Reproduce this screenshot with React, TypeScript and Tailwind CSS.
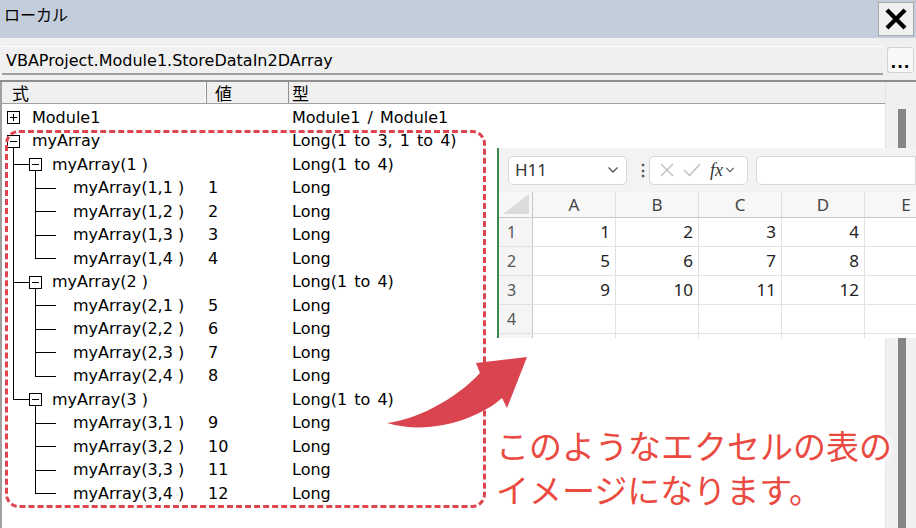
import React from 'react';

type Kind = 'rootPlus' | 'rootMinus' | 'mid' | 'leaf';

interface Row {
  kind: Kind;
  label: string;
  value?: string;
  type: string;
  lastMid?: boolean;
  lastLeaf?: boolean;
  underLast?: boolean;
}

const rows: Row[] = [
  { kind: 'rootPlus', label: 'Module1', type: 'Module1 / Module1' },
  { kind: 'rootMinus', label: 'myArray', type: 'Long(1 to 3, 1 to 4)' },
];
[1, 2, 3].forEach((k) => {
  rows.push({ kind: 'mid', label: `myArray(${k} )`, type: 'Long(1 to 4)', lastMid: k === 3 });
  [1, 2, 3, 4].forEach((j) => {
    rows.push({
      kind: 'leaf',
      label: `myArray(${k},${j} )`,
      value: String((k - 1) * 4 + j),
      type: 'Long',
      lastLeaf: j === 4,
      underLast: k === 3,
    });
  });
});

const textW: Record<Kind, number> = { rootPlus: 30, rootMinus: 30, mid: 50, leaf: 71 };

function Connector({ row }: { row: Row }) {
  const x0 = 11.5;
  const x1 = 33.5;
  const cy = 11.5;
  const s = { stroke: '#000', strokeWidth: 1, fill: 'none' };
  const w = textW[row.kind];
  return (
    <svg width={w} height={23.5} shapeRendering="crispEdges" className="shrink-0">
      {(row.kind === 'rootPlus' || row.kind === 'rootMinus') && (
        <>
          <rect x={5.5} y={5.5} width={12} height={12} {...s} fill="#fff" />
          <line x1={8} y1={cy} x2={15} y2={cy} {...s} />
          {row.kind === 'rootPlus' && <line x1={x0} y1={8} x2={x0} y2={15} {...s} />}
          {row.kind === 'rootMinus' && <line x1={x0} y1={17.5} x2={x0} y2={24} {...s} />}
        </>
      )}
      {row.kind === 'mid' && (
        <>
          <line x1={x0} y1={0} x2={x0} y2={row.lastMid ? cy : 24} {...s} />
          <line x1={x0} y1={cy} x2={27.5} y2={cy} {...s} />
          <rect x={27.5} y={5.5} width={12} height={12} {...s} fill="#fff" />
          <line x1={30} y1={cy} x2={37} y2={cy} {...s} />
          <line x1={x1} y1={17.5} x2={x1} y2={24} {...s} />
        </>
      )}
      {row.kind === 'leaf' && (
        <>
          {!row.underLast && <line x1={x0} y1={0} x2={x0} y2={24} {...s} />}
          <line x1={x1} y1={0} x2={x1} y2={row.lastLeaf ? cy : 24} {...s} />
          <line x1={x1} y1={cy} x2={54} y2={cy} {...s} />
        </>
      )}
    </svg>
  );
}

function Chevron({ className = '' }: { className?: string }) {
  return (
    <svg width="12" height="8" viewBox="0 0 12 8" className={className}>
      <path d="M1.5 1.5 L6 6 L10.5 1.5" stroke="#555" strokeWidth="1.3" fill="none" />
    </svg>
  );
}

function ExcelPanel() {
  const cols = ['A', 'B', 'C', 'D', 'E'];
  const data = [
    ['1', '2', '3', '4', ''],
    ['5', '6', '7', '8', ''],
    ['9', '10', '11', '12', ''],
    ['', '', '', '', ''],
    ['', '', '', '', ''],
  ];
  return (
    <div className="absolute left-[497px] top-[148px] w-[419px] h-[190px] overflow-hidden bg-white border-l-2 border-[#3c8a4f] font-['Noto_Sans',sans-serif]">
      {/* formula bar */}
      <div className="h-[44px] bg-[#f3f3f3] flex items-center pl-[9px] gap-[8px]">
        <div className="w-[119px] h-[29px] bg-white border border-[#d6d6d6] rounded-[5px] flex items-center justify-between pl-[6px] pr-[7px]">
          <span className="text-[17px] text-[#333]">H11</span>
          <Chevron />
        </div>
        <span className="text-[#555] text-[16px] font-bold leading-none w-[6px] text-center">⋮</span>
        <div className="w-[99px] h-[29px] bg-white border border-[#d6d6d6] rounded-[5px] flex items-center pl-[10px] gap-[9px]">
          <svg width="14" height="14" viewBox="0 0 14 14">
            <path d="M1 1 L13 13 M13 1 L1 13" stroke="#bcbcbc" strokeWidth="1.3" />
          </svg>
          <svg width="18" height="14" viewBox="0 0 18 14">
            <path d="M1 7 L6.5 12.5 L17 1" stroke="#bcbcbc" strokeWidth="1.3" fill="none" />
          </svg>
          <div className="flex items-center gap-[2px]">
            <span className="font-['Liberation_Serif',serif] italic text-[18px] text-[#333] leading-none">fx</span>
            <Chevron className="w-[10px]" />
          </div>
        </div>
        <div className="flex-1 h-[29px] bg-white border border-[#d6d6d6] rounded-l-[5px]" />
      </div>
      {/* grid */}
      <div className="flex h-[26px] bg-[#f7f7f7] border-b border-[#c8c8c8]">
        <div className="w-[34px] shrink-0 border-r border-[#c8c8c8] flex items-end justify-end p-[3px]">
          <div className="w-[26px] h-[20px] bg-[#dcdcdc] [clip-path:polygon(100%_0,100%_100%,0_100%)]" />
        </div>
        {cols.map((c) => (
          <div key={c} className="w-[83px] shrink-0 border-r border-[#e0e0e0] flex items-center justify-center text-[17px] text-[#444]">
            {c}
          </div>
        ))}
      </div>
      {data.map((r, i) => (
        <div key={i} className="flex h-[29px] border-b border-[#e2e2e2]">
          <div className="w-[34px] shrink-0 bg-[#f5f5f5] border-r border-[#c8c8c8] pl-[8px] flex items-center text-[16px] text-[#555]">
            {i < 4 ? i + 1 : ''}
          </div>
          {r.map((v, j) => (
            <div key={j} className="w-[83px] shrink-0 border-r border-[#e2e2e2] flex items-center justify-end pr-[5px] text-[17px] text-[#222]">
              {v}
            </div>
          ))}
        </div>
      ))}
    </div>
  );
}

export default function App() {
  return (
    <div className="w-[916px] h-[528px] relative overflow-hidden bg-[#f0f0f0] flex flex-col font-['DejaVu_Sans',sans-serif] text-black">
      {/* title bar */}
      <div className="h-[38px] bg-[#c4cddc] flex items-center justify-between pl-[4px] pr-[2px] shrink-0">
        <span className="font-['Noto_Sans_CJK_JP',sans-serif] text-[16px] leading-none -mt-[10px]">ローカル</span>
        <div className="w-[36px] h-[34px] bg-[#f0f0f0] border border-[#a8a8a8] flex items-center justify-center">
          <svg width="24" height="22" viewBox="0 0 24 22">
            <path d="M3 2 L21 20 M21 2 L3 20" stroke="#000" strokeWidth="4.2" />
          </svg>
        </div>
      </div>
      {/* context row */}
      <div className="h-[42px] flex items-center shrink-0 pr-[2px]">
        <div className="flex-1 h-[29px] ml-[2px] mt-[2px] border-t border-white border-b-2 border-b-[#a0a0a0] flex items-center pl-[4px] pt-[2px] text-[16px]">
          VBAProject.Module1.StoreDataIn2DArray
        </div>
        <div className="w-[27px] h-[26px] ml-[4px] mt-[2px] bg-[#f8f8f8] border border-[#d2d2d2] rounded-[3px] flex items-end justify-center pb-[1px] text-[15px] leading-none font-bold tracking-[1px]">
          ...
        </div>
      </div>
      {/* locals list */}
      <div className="flex-1 flex border-t-2 border-[#8d8d8d]">
        <div className="flex-1 flex flex-col bg-white border-l-2 border-[#a0a0a0]">
          <div className="h-[22px] flex bg-[#f0f0f0] border-b border-[#a0a0a0] font-['Noto_Sans_CJK_JP',sans-serif] text-[17px] leading-none">
            <div className="w-[205px] border-r border-[#909090] shadow-[inset_-1px_0_0_#fff] pl-[10px] flex items-center">式</div>
            <div className="w-[82px] border-r border-[#909090] pl-[8px] flex items-center">値</div>
            <div className="flex-1 pl-[3px] flex items-center">型</div>
          </div>
          <div className="pt-[2px] flex flex-col">
            {rows.map((r, i) => (
              <div key={i} className="h-[23.5px] flex items-center text-[16px] leading-none whitespace-pre">
                <div className="w-[205px] flex items-center">
                  <Connector row={r} />
                  <span>{r.label}</span>
                </div>
                <div className="w-[85px] pl-[1px]">{r.value ?? ''}</div>
                <div className="flex-1 [word-spacing:2px]">{r.type}</div>
              </div>
            ))}
          </div>
        </div>
        <div className="w-[31px] bg-[#f0f0f0] border-l border-[#e4e4e4] flex justify-center pt-[27px] pl-[2px]">
          <div className="w-[8px] h-full bg-[#858585]" />
        </div>
      </div>

      {/* dashed highlight */}
      <div className="absolute left-[5px] top-[130px] w-[481px] h-[378px] border-[3px] border-dashed border-[#e0454f] rounded-[14px]" />

      <ExcelPanel />

      {/* arrow */}
      <svg className="absolute left-[380px] top-[350px]" width="160" height="90" viewBox="0 0 160 90">
        <path d="M7 73 C35 70 75 50 100 23 L96 13 L147 7 L127 58 L122 48 C100 68 50 86 7 73 Z" fill="#d9444f" />
      </svg>

      {/* caption */}
      <div className="absolute left-[496px] top-[423px] font-['Noto_Sans_CJK_JP',sans-serif] text-[33px] leading-[44px] text-[#ea4a3f] [text-shadow:0_0_4px_#fff,0_0_6px_#fff,0_0_8px_#fff,0_0_10px_#fff] whitespace-nowrap">
        <div>このようなエクセルの表の</div>
        <div>イメージになります。</div>
      </div>
    </div>
  );
}
